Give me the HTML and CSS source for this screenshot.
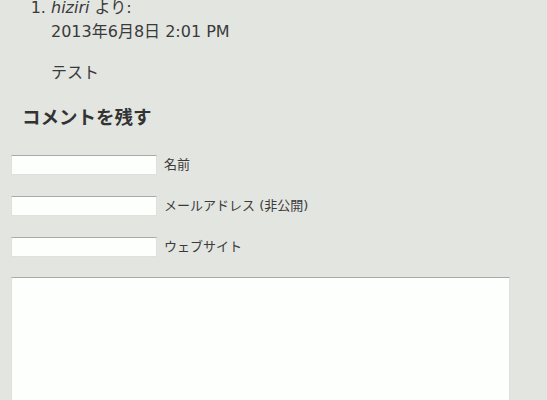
FILE: index.html
```html
<!DOCTYPE html>
<html>
  <head>
    <title>コメント</title>
    <meta charset="utf-8" />
    <link rel="stylesheet" href="styles.css">
  </head>
  <body>
    <div class="content">
      <ol class="commentlist">
        <li class="comment">
          <div class="comment-author"><cite>hiziri</cite> より:</div>
          <div class="comment-meta">2013年6月8日 2:01 PM</div>
          <p>テスト</p>
        </li>
      </ol>

      <div class="respond">
        <h3>コメントを残す</h3>
        <form class="comment-form">
          <p class="field">
            <input type="text" id="author" />
            <label for="author">名前</label>
          </p>
          <p class="field">
            <input type="text" id="email" />
            <label for="email">メールアドレス (非公開)</label>
          </p>
          <p class="field">
            <input type="text" id="url" />
            <label for="url">ウェブサイト</label>
          </p>
          <textarea id="comment" rows="10"></textarea>
        </form>
      </div>
    </div>
  </body>
</html>
```

FILE: styles.css
```css
body {
  margin: 0;
  background: #e3e5e1;
  color: #3a3a3a;
  font-family: "DejaVu Sans", Verdana, "Noto Sans CJK JP", sans-serif;
  font-size: 16px;
  line-height: 24px;
}

.content {
  padding: 0 0 0 11px;
}

/* Comment list */
.commentlist {
  margin: -4px 0 0;
  padding: 0 0 0 40px;
}

.commentlist cite {
  font-style: italic;
}

.commentlist p {
  margin: 17px 0 0;
}

/* Reply form */
.respond h3 {
  margin: 21px 0 0 11px;
  font-size: 18.5px;
  line-height: 24px;
  font-weight: bold;
  color: #333;
}

.comment-form {
  display: flex;
  flex-direction: column;
  gap: 21px;
  margin-top: 25px;
}

.field {
  margin: 0;
  display: flex;
  align-items: center;
  gap: 7px;
  font-size: 13px;
  line-height: 20px;
}

.field input {
  width: 146px;
  height: 20px;
  box-sizing: border-box;
  margin: 0;
  padding: 2px;
  border: 1px solid #dfe1dd;
  border-top-color: #a9aaa8;
  background: #fdfffc;
  font: inherit;
}

textarea {
  margin-top: -1px;
  width: 499px;
  height: 200px;
  box-sizing: border-box;
  border: 1px solid #dfe1dd;
  border-top-color: #a9aaa8;
  background: #fdfffc;
  resize: none;
}
```
